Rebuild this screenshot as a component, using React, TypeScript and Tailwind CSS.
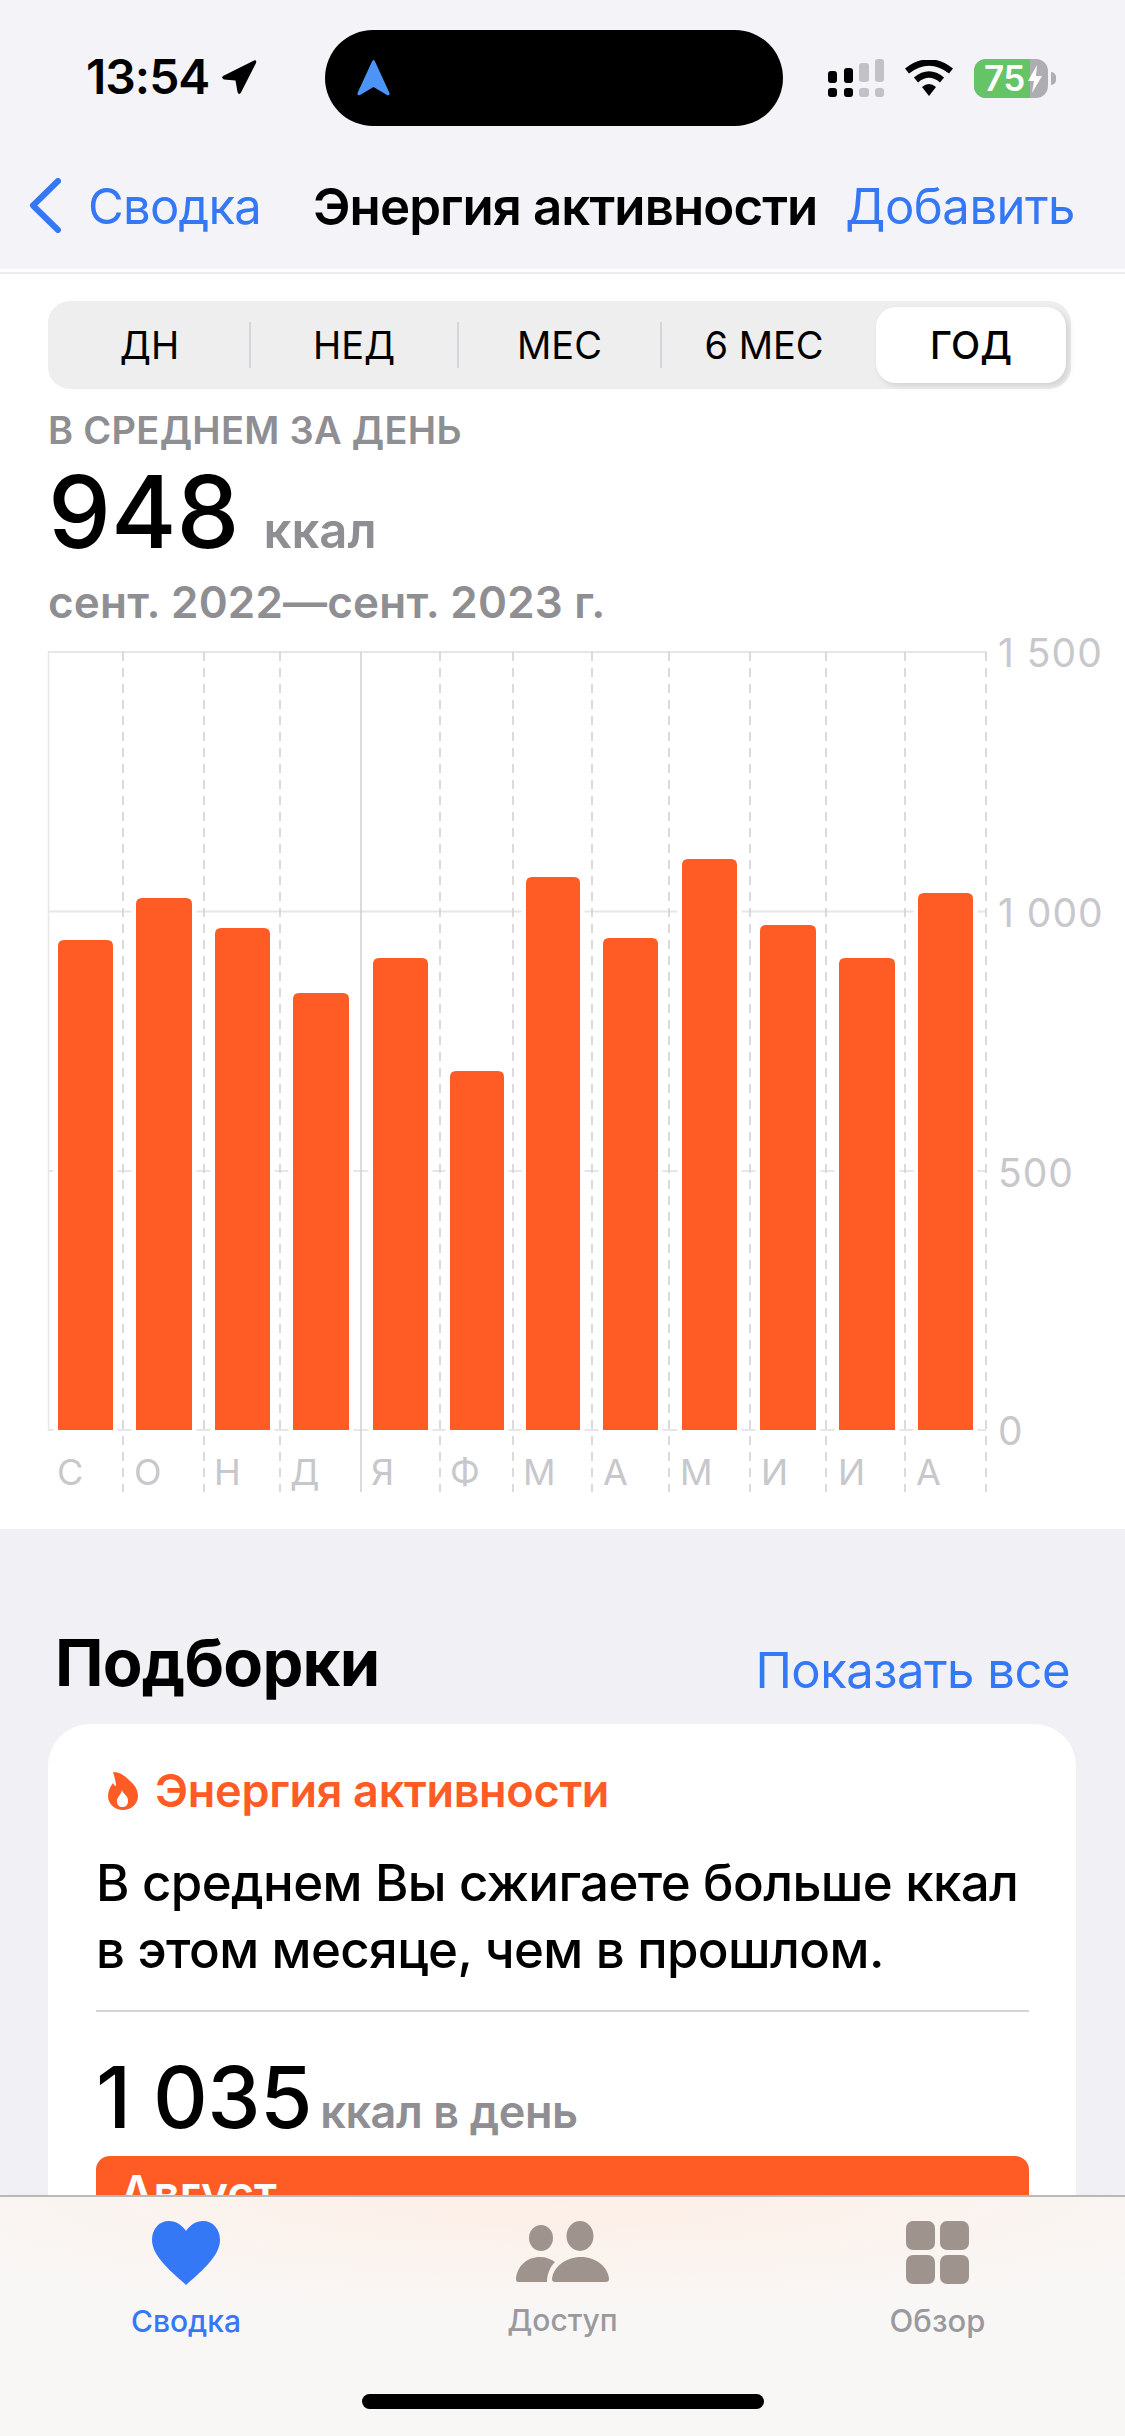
const bars = [
  { x: 58, w: 55, top: 941 },
  { x: 136, w: 56, top: 899 },
  { x: 215, w: 55, top: 929 },
  { x: 293, w: 56, top: 994 },
  { x: 373, w: 55, top: 959 },
  { x: 450, w: 54, top: 1072 },
  { x: 526, w: 54, top: 878 },
  { x: 603, w: 55, top: 939 },
  { x: 682, w: 55, top: 860 },
  { x: 760, w: 56, top: 926 },
  { x: 839, w: 56, top: 959 },
  { x: 918, w: 55, top: 894 },
];
const dashed = [123, 204, 280, 440, 513, 592, 669, 750, 826, 905, 986];
const months = [
  { l: "С", x: 57 },
  { l: "О", x: 134 },
  { l: "Н", x: 214 },
  { l: "Д", x: 290 },
  { l: "Я", x: 371 },
  { l: "Ф", x: 450 },
  { l: "М", x: 523 },
  { l: "А", x: 603 },
  { l: "М", x: 680 },
  { l: "И", x: 761 },
  { l: "И", x: 838 },
  { l: "А", x: 916 },
];

function StatusBar() {
  return (
    <div className="flex h-[156px] items-start pt-[30px]">
      <div className="flex h-[96px] w-[325px] items-center pb-[3px] pl-[86px]">
        <span className="text-[48px] font-semibold leading-none tracking-[-1px] text-black">13:54</span>
        <svg viewBox="0 0 36 36" className="ml-[12px] h-[36px] w-[36px]">
          <path d="M2 17 L33 1.5 Q36 0.5 35 4 L20 33.5 Q18 36.5 16.5 33 L14.5 21.5 L3 20.5 Q0 19 2 17 Z" fill="#000" />
        </svg>
      </div>
      <div className="flex h-[96px] w-[458px] items-center rounded-[48px] bg-black pl-[32px]">
        <svg viewBox="0 0 33 36" className="h-[36px] w-[33px]">
          <path d="M16.5 0 Q17.5 0 18 1.5 L32.5 33 Q33 36 30 35 L16.5 27 L3 35 Q0 36 0.5 33 L15 1.5 Q15.5 0 16.5 0 Z" fill="#4c94f8" />
        </svg>
      </div>
      <div className="ml-[45px] flex h-[96px] items-center">
        <svg viewBox="0 0 56 38" className="h-[38px] w-[56px]">
          <rect x="0" y="12" width="9" height="12" rx="3" fill="#000" />
          <rect x="16" y="9" width="9" height="15" rx="3" fill="#000" />
          <rect x="31" y="4" width="10" height="19" rx="3" fill="#c2c2c6" />
          <rect x="47" y="0" width="9" height="23" rx="3" fill="#c2c2c6" />
          <rect x="0" y="29" width="9" height="9" rx="3" fill="#000" />
          <rect x="16" y="29" width="9" height="9" rx="3" fill="#000" />
          <rect x="31" y="29" width="10" height="9" rx="3" fill="#c2c2c6" />
          <rect x="47" y="29" width="9" height="9" rx="3" fill="#c2c2c6" />
        </svg>
        <svg viewBox="0 0 50 36" className="ml-[20px] h-[36px] w-[50px]" fill="none">
          <path d="M3 11 Q25 -6 47 11" stroke="#000" strokeWidth={6.5} />
          <path d="M12 20 Q25 9 38 20" stroke="#000" strokeWidth={6.5} />
          <path d="M18 27 Q25 21 32 27 L25 36 Z" fill="#000" />
        </svg>
        <div className="relative ml-[20px] h-[39px] w-[74px] rounded-[12px] bg-[#aeaeb2]">
          <div className="flex h-full w-[56px] items-center rounded-l-[12px] bg-[#65c466] pl-[10px]">
            <span className="text-[35px] font-semibold leading-none tracking-[-0.5px] text-white">75</span>
          </div>
          <svg viewBox="0 0 14 28" className="absolute left-[54px] top-[6px] h-[28px] w-[14px]">
            <path d="M9 0 L0 16 L6 16 L4 28 L14 11 L8 11 Z" fill="#fff" />
          </svg>
        </div>
        <div className="ml-[3px] h-[13px] w-[5px] rounded-r-full bg-[#aeaeb2]" />
      </div>
    </div>
  );
}

function NavBar() {
  return (
    <div className="flex h-[113px] items-start pr-[50px]">
      <svg viewBox="0 0 32 55" className="ml-[29px] mt-[22px] h-[55px] w-[32px]" fill="none">
        <path d="M29 3 L4 27.5 L29 52" stroke="#3478f6" strokeWidth={6} strokeLinecap="round" strokeLinejoin="round" />
      </svg>
      <span className="ml-[27px] mt-[21px] text-[49px] leading-[60px] tracking-[-0.8px] text-[#3478f6]">Сводка</span>
      <span className="ml-[52px] mt-[21px] text-[51px] font-semibold leading-[60px] tracking-[-0.9px] text-black">Энергия активности</span>
      <span className="ml-auto mt-[21px] text-[49px] leading-[60px] tracking-[-0.5px] text-[#3478f6]">Добавить</span>
    </div>
  );
}

function Segments() {
  return (
    <div className="mx-[48px] flex h-[88px] w-[1023px] items-center rounded-[22px] bg-[#eeeeef] pl-[2px] pr-[4px]">
      <div className="w-[199px] text-center text-[38px] leading-none text-black">ДН</div>
      <div className="h-[46px] w-[2px] bg-[#d6d6d8]" />
      <div className="w-[206px] text-center text-[38px] leading-none text-black">НЕД</div>
      <div className="h-[46px] w-[2px] bg-[#d6d6d8]" />
      <div className="w-[201px] text-center text-[38px] leading-none text-black">МЕС</div>
      <div className="h-[46px] w-[2px] bg-[#d6d6d8]" />
      <div className="w-[204px] text-center text-[38px] leading-none text-black">6 МЕС</div>
      <div className="ml-[10px] flex h-[76px] w-[190px] items-center justify-center rounded-[20px] bg-white text-[38px] font-medium leading-none text-black shadow-[3px_3px_6px_rgba(0,0,0,0.12)]">
        ГОД
      </div>
    </div>
  );
}

function Chart() {
  return (
    <div className="relative h-[850px] w-full">
      {/* svg coords: x as on the page, y starts at 640 */}
      <svg viewBox="0 640 1125 860" className="absolute left-0 top-0 h-[860px] w-[1125px]" fill="none">
        <path d="M48 653 H986 M48 912.5 H986 M48 1172 H986 M48 1431 H986" stroke="#e6e6e8" strokeWidth={2} />
        <path d="M48.5 653 V1431" stroke="#e6e6e8" strokeWidth={1.5} />
        <path d="M361 653 V1493" stroke="#cfcfd2" strokeWidth={1.5} />
        {dashed.map((x) => (
          <path key={x} d={`M${x} 653 V1493`} stroke="#cfcfd2" strokeWidth={1.5} strokeDasharray="9 7" />
        ))}
        {bars.map((b) => (
          <path
            key={b.x}
            d={`M${b.x} 1431 V${b.top + 6} Q${b.x} ${b.top} ${b.x + 6} ${b.top} H${b.x + b.w - 6} Q${b.x + b.w} ${b.top} ${b.x + b.w} ${b.top + 6} V1431 Z`}
            fill="#ff5c25"
            stroke="#fff"
            strokeWidth={9}
            paintOrder="stroke"
          />
        ))}
      </svg>
      <span className="absolute left-[998px] top-[-10px] text-[39px] leading-[48px] tracking-[1px] text-[#c7c7cc]">1 500</span>
      <span className="absolute left-[998px] top-[250px] text-[39px] leading-[48px] tracking-[1px] text-[#c7c7cc]">1 000</span>
      <span className="absolute left-[998px] top-[510px] text-[39px] leading-[48px] tracking-[1px] text-[#c7c7cc]">500</span>
      <span className="absolute left-[998px] top-[768px] text-[39px] leading-[48px] text-[#c7c7cc]">0</span>
      {months.map((m, i) => (
        <span
          key={i}
          className="absolute top-[811px] text-[36px] leading-[44px] text-[#c7c7cc]"
          style={{ left: m.x }}
        >
          {m.l}
        </span>
      ))}
    </div>
  );
}

function HighlightCard() {
  return (
    <div className="mx-[48px] h-[800px] w-[1028px] rounded-[42px] bg-white px-[48px] pt-[42px]">
      <div className="flex items-center pl-[12px]">
        <svg viewBox="0 0 30 38" className="h-[38px] w-[30px]">
          <path
            d="M5 0 C12 0 17 4 22 9 C27 13 30 18 30 24 C30 32 23 38 15 38 C7 38 0 32 0 24 C0 19 2 15 5 11 C6 13 7 14 8 14 C8 9 6 4 5 0 Z"
            fill="#ff5c25"
          />
          <path d="M14 18 C15 22 21 24 20 30 C19.5 34 17 35 14.5 35 C11 35 9 33 9 29 C9 25 13 23 14 18 Z" fill="#fff" />
        </svg>
        <span className="ml-[17px] text-[45px] font-semibold leading-[50px] tracking-[-0.3px] text-[#ff5c25]">Энергия активности</span>
      </div>
      <p className="mt-[33px] whitespace-nowrap text-[51px] font-medium leading-[67px] tracking-[-0.6px] text-black">
        В среднем Вы сжигаете больше ккал
        <br />в этом месяце, чем в прошлом.
      </p>
      <div className="mt-[27px] h-[2px] w-[933px] bg-[#d4d4d6]" />
      <div className="mt-[38px] flex h-[96px] items-baseline">
        <span className="text-[85px] font-medium leading-[96px] tracking-[-0.5px] text-black">1 035</span>
        <span className="ml-[8px] text-[45px] font-semibold leading-none tracking-[-0.4px] text-[#8e8e93]">ккал в день</span>
      </div>
      <div className="mt-[10px] h-[160px] w-[933px] rounded-[14px] bg-[#ff5c25] pl-[24px] pt-[11px] text-[46px] font-semibold leading-[50px] text-white">
        Август
      </div>
    </div>
  );
}

function TabBar() {
  return (
    <div className="absolute bottom-0 left-0 h-[241px] w-full border-t-2 border-[#b9b9b9] bg-[radial-gradient(ellipse_70%_50%_at_50%_0%,#fdefe6,#f8f7f6)]">
      <div className="flex h-[200px] items-start pt-[24px]">
        <div className="flex w-[375px] flex-col items-center pr-[3px]">
          <svg viewBox="0 0 68 64" className="h-[64px] w-[68px]">
            <path
              d="M34 64 C22 53 0 36 0 19 C0 8 7 0 17 0 C24 0 30 4 34 10 C38 4 44 0 51 0 C61 0 68 8 68 19 C68 36 46 53 34 64 Z"
              fill="#3478f6"
            />
          </svg>
          <span className="mt-[18px] text-[30px] font-medium leading-[36px] text-[#3478f6]">Сводка</span>
        </div>
        <div className="flex w-[375px] flex-col items-center">
          <svg viewBox="0 0 94 62" className="h-[62px] w-[94px]">
            <ellipse cx="25" cy="17" rx="12" ry="13" fill="#9e948d" />
            <ellipse cx="64" cy="15" rx="13.5" ry="15" fill="#9e948d" />
            <path d="M2 61 Q0 61 0 58 C1 45 11 36 24 36 C30 36 35 38 39 41 C34 46 31 53 31 61 Z" fill="#9e948d" />
            <path d="M39 61 Q36 61 36 58 C37 46 50 36 65 36 C80 36 92 46 93 58 Q93 61 90 61 Z" fill="#9e948d" />
          </svg>
          <span className="mt-[19px] text-[30px] font-medium leading-[36px] text-[#9a9a9e]">Доступ</span>
        </div>
        <div className="flex w-[375px] flex-col items-center">
          <div className="grid h-[63px] w-[63px] grid-cols-2 gap-[5px]">
            <div className="rounded-[7px] bg-[#9e948d]" />
            <div className="rounded-[7px] bg-[#9e948d]" />
            <div className="rounded-[7px] bg-[#9e948d]" />
            <div className="rounded-[7px] bg-[#9e948d]" />
          </div>
          <span className="mt-[19px] text-[31px] font-medium leading-[36px] text-[#9a9a9e]">Обзор</span>
        </div>
      </div>
      <div className="mx-auto mt-[-3px] h-[15px] w-[402px] rounded-full bg-black" />
    </div>
  );
}

export default function App() {
  return (
    <div className="relative h-[2436px] w-[1125px] overflow-hidden bg-[#f0f0f5] font-['Inter',sans-serif]">
      <div className="h-[269px] bg-[#f3f3f8]">
        <StatusBar />
        <NavBar />
      </div>
      <div className="h-[1260px] bg-white pt-[3px]">
        <div className="h-[2px] bg-[#ececee]" />
        <div className="pt-[27px]">
          <Segments />
          <div className="ml-[48px] mt-[19px] text-[38px] font-semibold leading-[44px] tracking-[0.3px] text-[#8e8e93]">В СРЕДНЕМ ЗА ДЕНЬ</div>
          <div className="ml-[48px] mt-[4px] flex h-[112px] items-baseline">
            <span className="text-[100px] font-medium leading-[112px] text-black">948</span>
            <span className="ml-[24px] text-[49px] font-semibold leading-none text-[#8e8e93]">ккал</span>
          </div>
          <div className="ml-[48px] mt-[9px] text-[44px] font-semibold leading-[50px] tracking-[0.2px] text-[#8e8e93]">сент. 2022—сент. 2023 г.</div>
          <div className="mt-[12px]">
            <Chart />
          </div>
        </div>
      </div>
      <div className="flex h-[195px] items-end justify-between pb-[23px] pl-[55px] pr-[55px]">
        <span className="text-[65px] font-bold leading-[76px] tracking-[-0.8px] text-black">Подборки</span>
        <span className="text-[49px] leading-[60px] tracking-[-0.5px] text-[#3478f6]">Показать все</span>
      </div>
      <HighlightCard />
      <TabBar />
    </div>
  );
}
